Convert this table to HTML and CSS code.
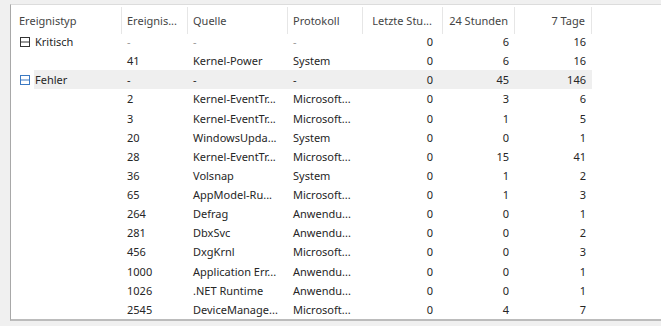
FILE: index.html
```html
<!DOCTYPE html>
<html lang="de">
<head>
<meta charset="utf-8">
<link rel="stylesheet" href="styles.css">
</head>
<body>
<div class="panel">
  <div class="row head">
    <div class="c sep">Ereignistyp</div>
    <div class="c sep">Ereignis...</div>
    <div class="c sep">Quelle</div>
    <div class="c sep">Protokoll</div>
    <div class="c sep r r10">Letzte Stu...</div>
    <div class="c sep r">24 Stunden</div>
    <div class="c sep r">7 Tage</div>
    <div class="c"></div>
  </div>

  <div class="row">
    <div class="c grp"><svg class="tg" width="10" height="10" viewBox="0 0 10 10"><rect x="0.5" y="0.5" width="9" height="9" fill="none" stroke="#333" stroke-width="1"/><line x1="0.5" y1="5" x2="9.5" y2="5" stroke="#333" stroke-width="1"/></svg><span class="lab">Kritisch</span></div>
    <div class="c dim">-</div><div class="c dim">-</div><div class="c dim">-</div>
    <div class="c r r10">0</div><div class="c r">6</div><div class="c r">16</div><div class="c"></div>
  </div>
  <div class="row">
    <div class="c"></div><div class="c">41</div><div class="c">Kernel-Power</div><div class="c">System</div>
    <div class="c r r10">0</div><div class="c r">6</div><div class="c r">16</div><div class="c"></div>
  </div>
  <div class="row hl">
    <div class="c grp"><svg class="tg" width="10" height="10" viewBox="0 0 10 10"><rect x="0.5" y="0.5" width="9" height="9" fill="none" stroke="#3b79c2" stroke-width="1"/><line x1="0.5" y1="5" x2="9.5" y2="5" stroke="#3b79c2" stroke-width="1"/></svg><span class="lab">Fehler</span></div>
    <div class="c">-</div><div class="c">-</div><div class="c">-</div>
    <div class="c r r10">0</div><div class="c r">45</div><div class="c r">146</div><div class="c plain"></div>
  </div>
  <div class="row"><div class="c"></div><div class="c">2</div><div class="c">Kernel-EventTr...</div><div class="c">Microsoft...</div><div class="c r r10">0</div><div class="c r">3</div><div class="c r">6</div><div class="c"></div></div>
  <div class="row"><div class="c"></div><div class="c">3</div><div class="c">Kernel-EventTr...</div><div class="c">Microsoft...</div><div class="c r r10">0</div><div class="c r">1</div><div class="c r">5</div><div class="c"></div></div>
  <div class="row"><div class="c"></div><div class="c">20</div><div class="c">WindowsUpda...</div><div class="c">System</div><div class="c r r10">0</div><div class="c r">0</div><div class="c r">1</div><div class="c"></div></div>
  <div class="row"><div class="c"></div><div class="c">28</div><div class="c">Kernel-EventTr...</div><div class="c">Microsoft...</div><div class="c r r10">0</div><div class="c r">15</div><div class="c r">41</div><div class="c"></div></div>
  <div class="row"><div class="c"></div><div class="c">36</div><div class="c">Volsnap</div><div class="c">System</div><div class="c r r10">0</div><div class="c r">1</div><div class="c r">2</div><div class="c"></div></div>
  <div class="row"><div class="c"></div><div class="c">65</div><div class="c">AppModel-Ru...</div><div class="c">Microsoft...</div><div class="c r r10">0</div><div class="c r">1</div><div class="c r">3</div><div class="c"></div></div>
  <div class="row"><div class="c"></div><div class="c">264</div><div class="c">Defrag</div><div class="c">Anwendu...</div><div class="c r r10">0</div><div class="c r">0</div><div class="c r">1</div><div class="c"></div></div>
  <div class="row"><div class="c"></div><div class="c">281</div><div class="c">DbxSvc</div><div class="c">Anwendu...</div><div class="c r r10">0</div><div class="c r">0</div><div class="c r">2</div><div class="c"></div></div>
  <div class="row"><div class="c"></div><div class="c">456</div><div class="c">DxgKrnl</div><div class="c">Microsoft...</div><div class="c r r10">0</div><div class="c r">0</div><div class="c r">3</div><div class="c"></div></div>
  <div class="row"><div class="c"></div><div class="c">1000</div><div class="c">Application Err...</div><div class="c">Anwendu...</div><div class="c r r10">0</div><div class="c r">0</div><div class="c r">1</div><div class="c"></div></div>
  <div class="row"><div class="c"></div><div class="c">1026</div><div class="c">.NET Runtime</div><div class="c">Anwendu...</div><div class="c r r10">0</div><div class="c r">0</div><div class="c r">1</div><div class="c"></div></div>
  <div class="row"><div class="c"></div><div class="c">2545</div><div class="c">DeviceManage...</div><div class="c">Microsoft...</div><div class="c r r10">0</div><div class="c r">4</div><div class="c r">7</div><div class="c"></div></div>
</div>
</body>
</html>
```

FILE: styles.css
```css
html, body {
  margin: 0;
  padding: 0;
  background: #f0f0f0;
  width: 661px;
  height: 326px;
  overflow: hidden;
}
body {
  padding-top: 4px;
  padding-left: 10px;
  box-sizing: border-box;
  font-family: "Noto Sans", "Open Sans", sans-serif;
  font-size: 11px;
  color: #262626;
}
.panel {
  background: #fff;
  border-top: 1px solid #dcdcdc;
  border-left: 1px solid #a8a8a8;
  border-bottom: 2px solid #bcbcbc;
  height: 314px;
  overflow: hidden;
}
.row {
  display: grid;
  grid-template-columns: 111px 66px 100px 75px 80px 72px 77px 1fr;
  height: 19.14px;
  align-items: center;
}
.row.head {
  height: 27px;
  color: #444;
  align-items: stretch;
}
.c {
  padding-left: 5px;
  white-space: nowrap;
  overflow: hidden;
  display: flex;
  align-items: center;
  height: 100%;
  line-height: 1;
}
.row > .c:first-child { padding-left: 8px; }
.head .sep { border-right: 1px solid #e6e6e6; margin: 2px 0 5px; }
.c.r { justify-content: flex-end; padding-left: 0; padding-right: 6px; }
.c.r10 { padding-right: 10px; }
.dim { color: #9a9a9a; }
.grp { gap: 0; }
.tg { flex: none; margin-left: 1px; margin-right: 4px; }
.lab { flex: 1; display: flex; align-items: center; height: 100%; padding-left: 1px; }
.hl > .c { background: #efefef; }
.hl > .c.grp { background: transparent; }
.hl > .c.grp .lab { background: #efefef; }
.hl > .c.plain { background: #fff; }
```
